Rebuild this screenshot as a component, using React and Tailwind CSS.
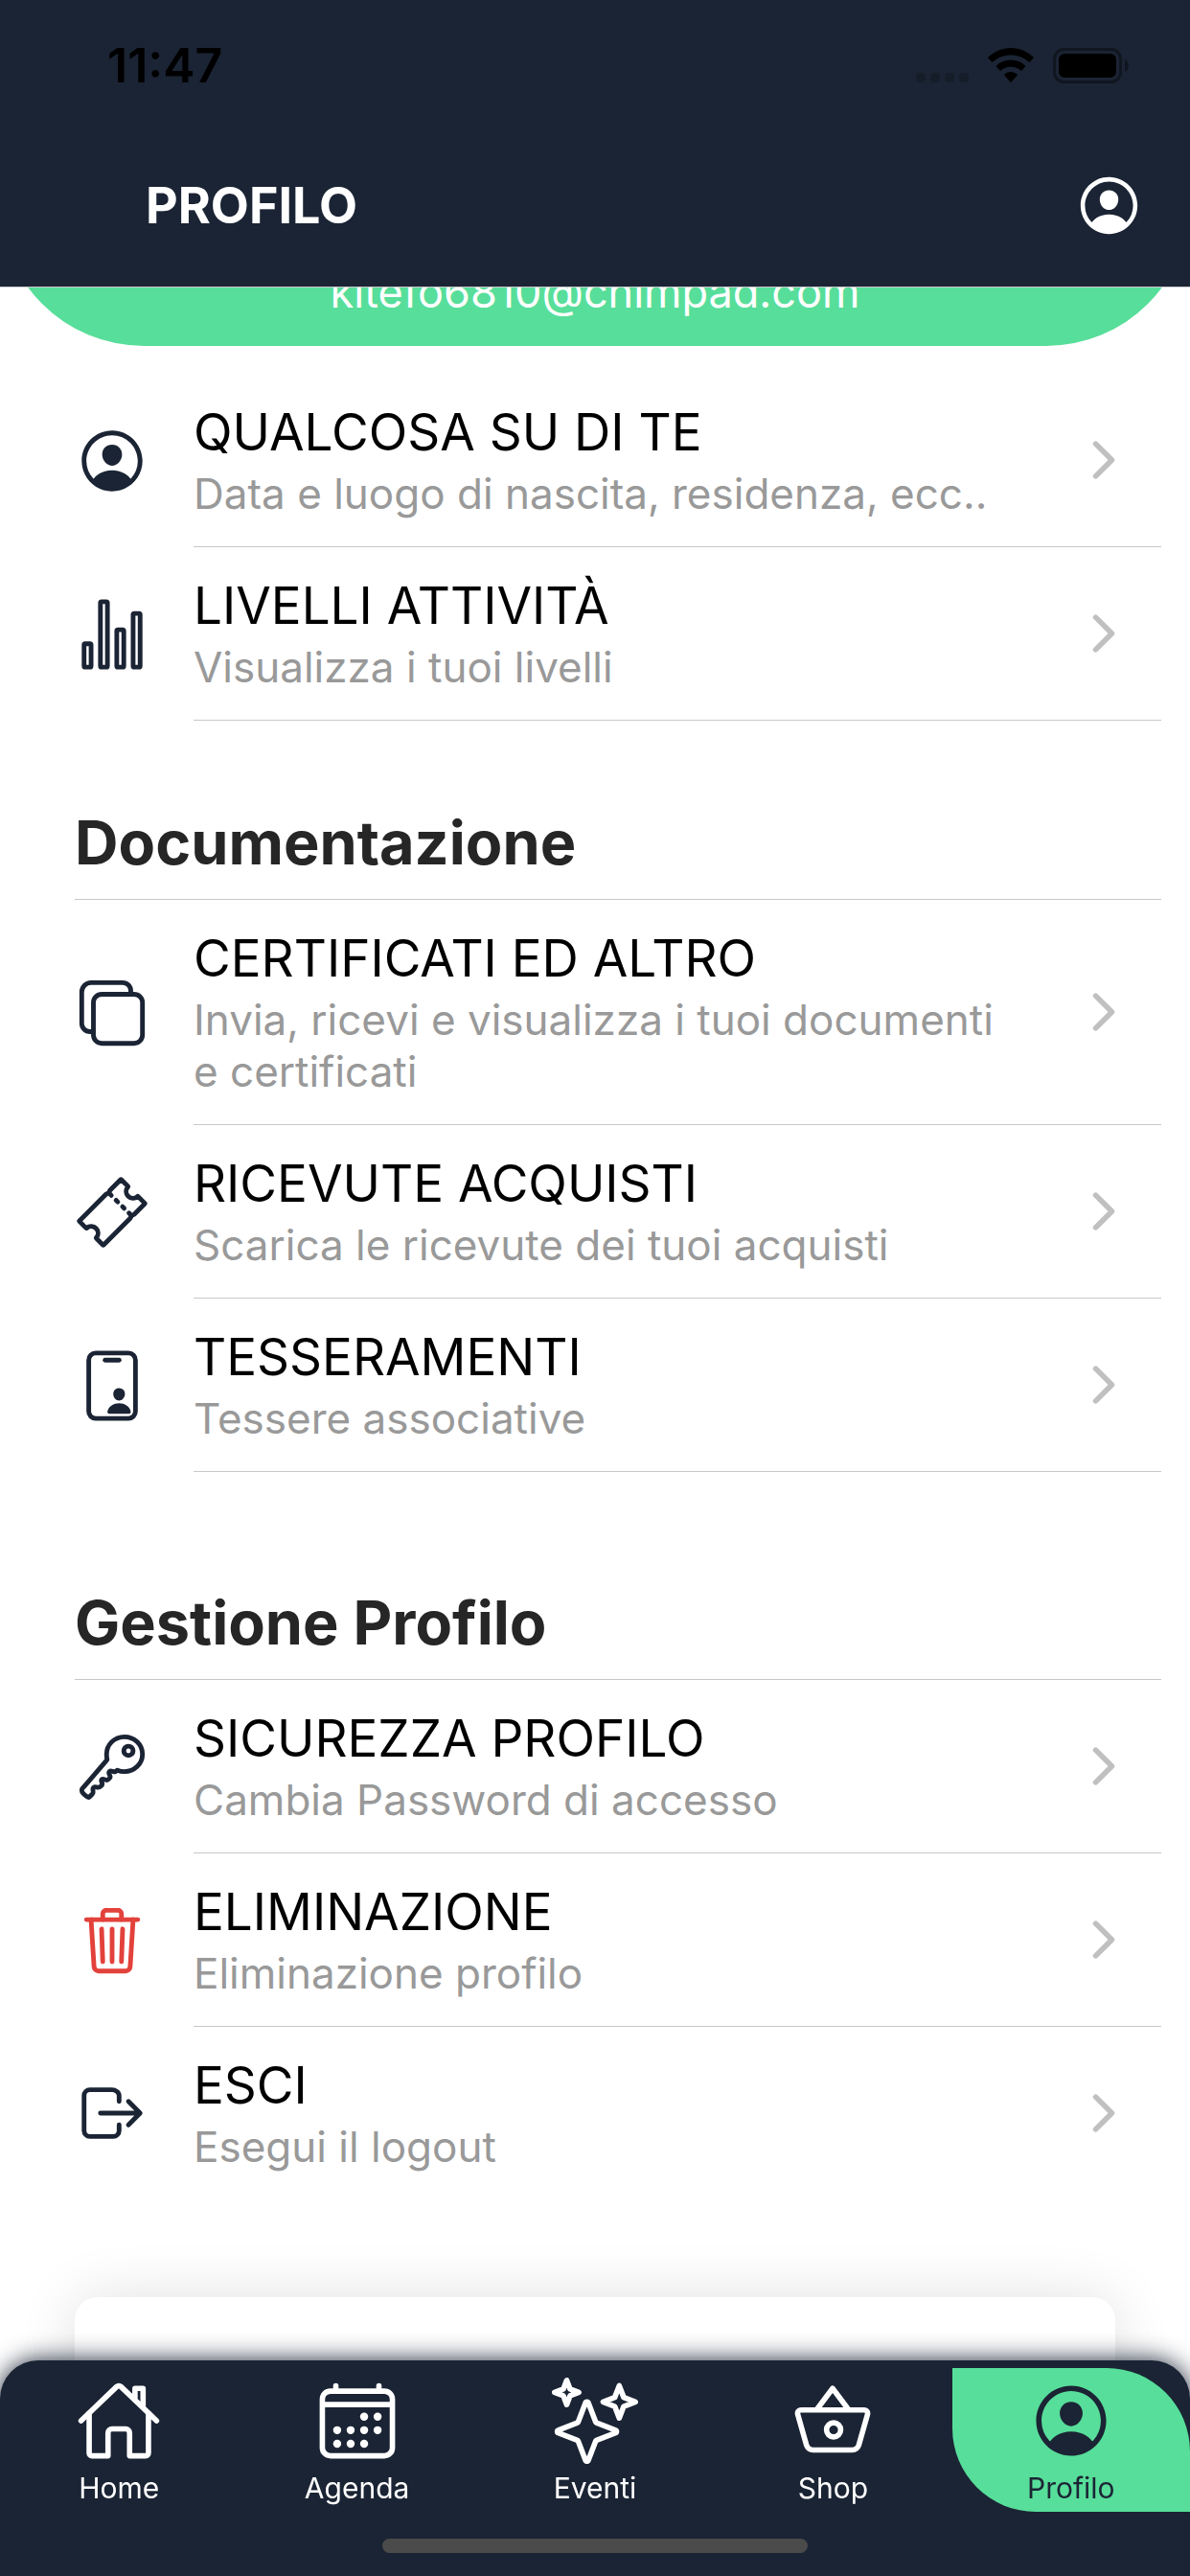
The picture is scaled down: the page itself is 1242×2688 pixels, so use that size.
import React from "react";
import {
  IoPersonCircleOutline,
  IoStatsChartOutline,
  IoCopyOutline,
  IoTicketOutline,
  IoIdCardOutline,
  IoKeyOutline,
  IoTrashOutline,
  IoLogOutOutline,
  IoChevronForward,
  IoHomeOutline,
  IoCalendarOutline,
  IoSparklesOutline,
  IoBasketOutline,
} from "react-icons/io5";

const groups = [
  {
    rows: [
      { icon: IoPersonCircleOutline, title: "QUALCOSA SU DI TE", text: "Data e luogo di nascita, residenza, ecc.." },
      { icon: IoStatsChartOutline, title: "LIVELLI ATTIVITÀ", text: "Visualizza i tuoi livelli" },
    ],
  },
  {
    heading: "Documentazione",
    rows: [
      { icon: IoCopyOutline, title: "CERTIFICATI ED ALTRO", text: "Invia, ricevi e visualizza i tuoi documenti e certificati" },
      { icon: IoTicketOutline, title: "RICEVUTE ACQUISTI", text: "Scarica le ricevute dei tuoi acquisti" },
      { icon: IoIdCardOutline, title: "TESSERAMENTI", text: "Tessere associative" },
    ],
  },
  {
    heading: "Gestione Profilo",
    rows: [
      { icon: IoKeyOutline, title: "SICUREZZA PROFILO", text: "Cambia Password di accesso" },
      { icon: IoTrashOutline, title: "ELIMINAZIONE", text: "Eliminazione profilo", danger: true },
      { icon: IoLogOutOutline, title: "ESCI", text: "Esegui il logout", last: true },
    ],
  },
];

const tabs = [
  { icon: IoHomeOutline, label: "Home" },
  { icon: IoCalendarOutline, label: "Agenda" },
  { icon: IoSparklesOutline, label: "Eventi" },
  { icon: IoBasketOutline, label: "Shop" },
  { icon: IoPersonCircleOutline, label: "Profilo", active: true },
];

function StatusBar() {
  return (
    <div className="flex items-center justify-between pl-28 pr-16 pt-9 text-black">
      <time className="text-[50px] leading-[64px] font-semibold">11:47</time>
      <div className="flex items-center gap-5">
        <svg className="h-[37px] w-[55px]" viewBox="0 0 55 37" fill="#151d29" aria-hidden="true">
          <rect x="0" y="26" width="10" height="10" rx="4" />
          <rect x="15" y="26" width="10" height="10" rx="4" />
          <rect x="30" y="26" width="10" height="10" rx="4" />
          <rect x="45" y="26" width="10" height="10" rx="4" />
        </svg>
        <svg className="h-[37px] w-[48px]" viewBox="0 0 48 37" aria-hidden="true">
          <path d="M24 0C33 0 41 3.600 47.500 9.600Q48 10.200 47.500 10.800L43.900 14.600Q43.300 15.100 42.700 14.600C37.600 10 31 7.500 24 7.500S10.400 10 5.300 14.600Q4.700 15.100 4.100 14.600L.5 10.800Q0 10.200.5 9.600C7 3.600 15 0 24 0Z" />
          <path d="M24 12.500C29.700 12.500 34.900 14.600 39 18.400Q39.600 19 39 19.600L35.400 23.400Q34.800 24 34.200 23.400C31.400 21 27.900 19.800 24 19.800S16.600 21 13.800 23.400Q13.200 24 12.600 23.400L9 19.600Q8.400 19 9 18.400C13.100 14.600 18.300 12.500 24 12.500Z" />
          <path d="M24 25C26.500 25 28.800 25.900 30.600 27.400Q31.300 28 30.700 28.600L24.600 35.500Q24 36 23.400 35.500L17.300 28.600Q16.700 28 17.400 27.400C19.200 25.900 21.500 25 24 25Z" />
        </svg>
        <svg className="h-[37px] w-[79px]" viewBox="0 0 79 37" aria-hidden="true">
          <rect x="1.500" y="1.500" width="69" height="34" rx="10" fill="none" stroke="#10161f" strokeWidth="3" />
          <rect x="6" y="6" width="60" height="25" rx="6" />
          <path d="M75 12c5 2.500 5 11 0 13z" fill="#10161f" />
        </svg>
      </div>
    </div>
  );
}

function Row({ icon: Icon, title, text, danger, last }) {
  return (
    <li className="pl-[78px] pr-[30px]">
      <button type="button" className="flex w-full items-stretch gap-[46px] text-left">
        <span className={danger ? "flex items-center text-[#e3413b]" : "flex items-center text-[#1b2434]"}>
          <Icon className="size-[78px]" />
        </span>
        <span className={last ? "flex flex-1 items-center" : "flex flex-1 items-center border-b border-[#c8c7cc]"}>
          <span className="flex-1 pt-7 pb-7">
            <span className="block text-[53px] leading-[66px] text-black">{title}</span>
            <span className="mt-1 block text-[44px] leading-[54px] text-[#999999]">{text}</span>
          </span>
          <IoChevronForward className="mr-[30px] ml-16 size-[60px] text-[#c0c0c0]" />
        </span>
      </button>
    </li>
  );
}

export default function App() {
  return (
    <div className="flex h-screen flex-col overflow-hidden bg-white font-['Inter',sans-serif]">
      <header className="border-b border-[#c8c7cc] bg-[#1b2434]">
        <StatusBar />
        <div className="flex items-center justify-between pt-[78px] pr-12 pb-[48px] pl-[152px]">
          <h1 className="text-[52px] leading-[72px] font-bold text-white">PROFILO</h1>
          <button type="button" aria-label="Profilo" className="text-white">
            <IoPersonCircleOutline className="size-[73px]" />
          </button>
        </div>
      </header>

      <main className="min-h-0 flex-1 overflow-hidden">
        <section className="flex h-[61px] flex-col justify-end overflow-hidden">
          <div className="rounded-b-[150px] bg-[#57de9a] pt-64 pb-[26px] text-center text-[45px] leading-[60px] text-white">
            kitefo6810@chimpad.com
          </div>
        </section>

        <div className="flex flex-col pt-[29px]">
          {groups.map((g, i) => (
            <section key={i} className={i === 2 ? "pt-[118px]" : i === 1 ? "pt-[88px]" : ""}>
              {g.heading && (
                <h2 className="mr-[30px] ml-[78px] border-b border-[#c8c7cc] pb-5 text-[63px] leading-[78px] font-bold text-[#262626]">
                  {g.heading}
                </h2>
              )}
              <ul>
                {g.rows.map((r) => (
                  <Row key={r.title} {...r} />
                ))}
              </ul>
            </section>
          ))}
        </div>

        <div className="mx-[78px] mt-[102px] h-60 rounded-[24px] bg-white shadow-[0_0_60px_rgba(0,0,0,0.12)]" />
      </main>

      <nav className="fixed inset-x-0 bottom-0 rounded-t-[40px] bg-[#1b2434] pt-2 shadow-[0_0_26px_#1b2434]">
        <ul className="grid grid-cols-5">
          {tabs.map(({ icon: Icon, label, active }) => (
            <li key={label}>
              <a
                href="#"
                className={
                  active
                    ? "flex flex-col items-center rounded-tr-[87px] rounded-bl-[87px] bg-[#57de9a] pt-[10px] pb-1 text-[#1b2434]"
                    : "flex flex-col items-center pt-[10px] pb-1 text-white"
                }
              >
                <Icon className="size-[90px]" />
                <span className="mt-1 text-[30px] leading-[42px]">{label}</span>
              </a>
            </li>
          ))}
        </ul>
        <div className="mx-auto mt-[28px] mb-6 h-[15px] w-[444px] rounded-full bg-[#4b4b4b]" />
      </nav>
    </div>
  );
}
